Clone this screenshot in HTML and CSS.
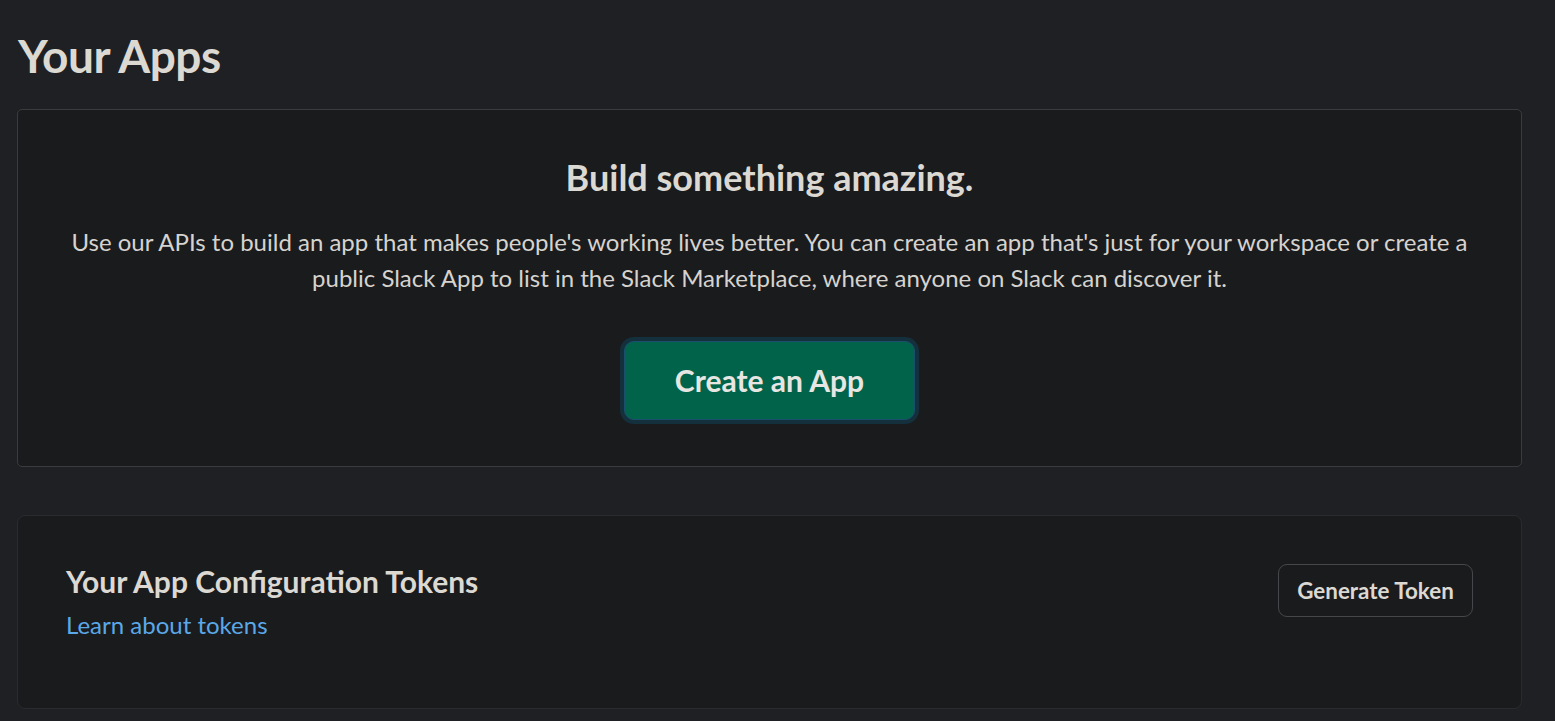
FILE: index.html
```html
<!DOCTYPE html>
<html lang="en">
<head>
<meta charset="utf-8">
<title>Your Apps</title>
<link rel="stylesheet" href="styles.css">
</head>
<body>
<main class="page">
  <h1 class="page-title">Your Apps</h1>
  <section class="card hero">
    <h2 class="hero-title">Build something amazing.</h2>
    <p class="hero-text">Use our APIs to build an app that makes people's working lives better. You can create an app that's just for your workspace or create a public Slack App to list in the Slack Marketplace, where anyone on Slack can discover it.</p>
    <div class="hero-action">
      <button class="btn-primary" type="button">Create an App</button>
    </div>
  </section>
  <section class="card tokens">
    <div class="tokens-info">
      <h3 class="tokens-title">Your App Configuration Tokens</h3>
      <a class="tokens-link" href="#">Learn about tokens</a>
    </div>
    <button class="btn-secondary" type="button">Generate Token</button>
  </section>
</main>
</body>
</html>
```
FILE: styles.css
```css
* { box-sizing: border-box; }
html, body {
  margin: 0;
  background: #1f2023;
  color: #d6d3ce;
  font-family: Lato, "Open Sans", "Noto Sans", sans-serif;
}
.page {
  padding: 24px 33px 0 17px;
}
.page-title {
  margin: 0 0 21px 1px;
  font-size: 46px;
  font-weight: 700;
  line-height: 64px;
  letter-spacing: -0.5px;
  color: #dcd8d2;
}
.card {
  background: #1a1b1d;
  border: 1px solid #3a3b3e;
  border-radius: 5px;
}
.hero {
  text-align: center;
  padding: 45px 40px 46px;
  margin-bottom: 48px;
}
.hero-title {
  margin: 0 0 25px;
  font-size: 36px;
  line-height: 44px;
  font-weight: 700;
  color: #dcd8d2;
}
.hero-text {
  margin: 0;
  font-size: 24px;
  line-height: 36px;
  color: #d6d3ce;
}
.hero-action {
  margin-top: 45px;
  display: flex;
  justify-content: center;
}
.btn-primary {
  width: 291px;
  height: 79px;
  padding-bottom: 3px;
  background: #00634a;
  color: #e8e6e2;
  border: 1px solid #1c4f6e;
  border-radius: 10px;
  box-shadow: 0 0 0 4px #13303c;
  font-family: inherit;
  font-size: 30px;
  font-weight: 700;
  cursor: pointer;
}
.tokens {
  border-color: #2a2b2e;
  border-radius: 8px;
  padding: 45px 48px 67px;
  display: flex;
  justify-content: space-between;
  align-items: flex-start;
}
.tokens-title {
  margin: 0;
  font-size: 30px;
  line-height: 40px;
  font-weight: 700;
  color: #dcd8d2;
}
.tokens-link {
  display: block;
  margin-top: 8px;
  font-size: 24px;
  line-height: 32px;
  color: #5aa8e8;
  text-decoration: none;
}
.btn-secondary {
  margin-top: 3px;
  width: 195px;
  height: 53px;
  background: transparent;
  border: 1px solid #45474a;
  border-radius: 9px;
  color: #dcd8d2;
  font-family: inherit;
  font-size: 22.4px;
  font-weight: 700;
  cursor: pointer;
}
```
